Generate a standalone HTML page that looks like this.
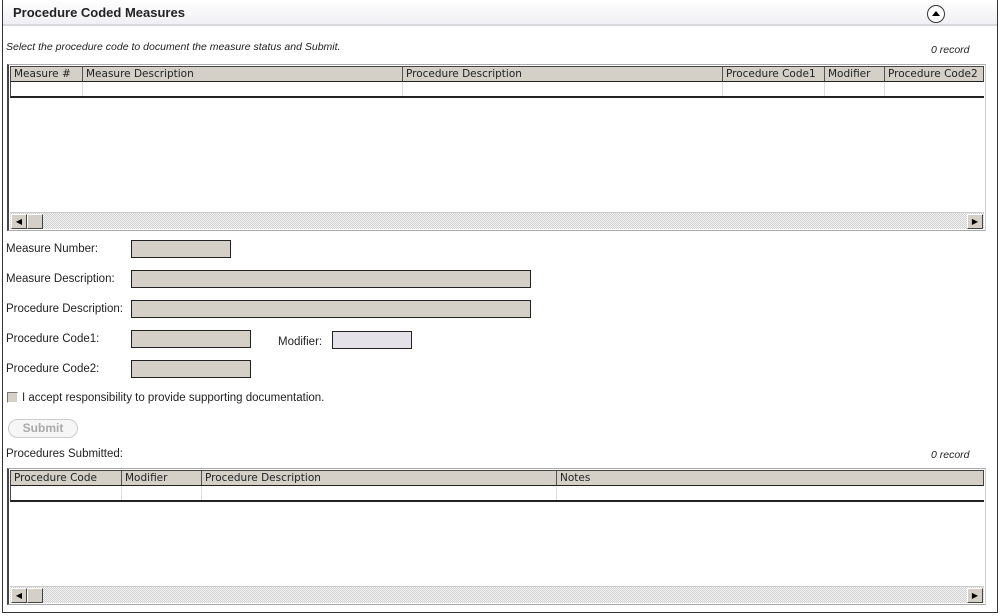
<!DOCTYPE html>
<html><head><style>
*{box-sizing:border-box;margin:0;padding:0}
body{width:1003px;height:616px;background:#fff;font-family:"Liberation Sans",sans-serif;font-size:11.5px;color:#222;position:relative;overflow:hidden}
.a{position:absolute}
.frame{left:2px;top:0;width:996px;height:613px;border:1px solid #333;border-top:none}
.hdr{left:3px;top:0;width:994px;height:26px;background:linear-gradient(#fff,#f0eff3);border-bottom:2px solid #d8d8dc}
.title{left:13px;top:5px;font-weight:bold;font-size:13px;color:#222}
.grid{border:1px solid #aaa;border-left:2px solid #444;border-right:1px solid #ccc}
.gh{position:absolute;left:1px;right:1px;top:1px;height:16px;background:#d4d0c8;border:1px solid #444;border-bottom:1px solid #222;font-family:"DejaVu Sans",sans-serif;font-size:10.5px}
.gh div,.gr div{position:absolute;top:0;height:100%;border-left:1px solid #555;padding-left:3px;line-height:14px;white-space:nowrap}
.gr{position:absolute;left:1px;right:1px;top:17px;height:16px;border-left:1px solid #444;border-bottom:2px solid #222}
.gr div{border-left:1px solid #ddd}
.sb{position:absolute;left:1px;right:1px;height:17px;background:repeating-conic-gradient(#d0d0d0 0 25%,#f4f4f4 0 50%) 0 0/2px 2px;border-top:1px solid #ccc}
.btn{position:absolute;top:1px;width:16px;height:15px;background:#d4d0c8;border:1px solid;border-color:#fff #444 #444 #fff;font-size:8px;line-height:13px;text-align:center;color:#000}
.inp{background:#d4d0c8;border:1px solid #222;height:18px}
.it{font-style:italic;font-size:10.5px}
</style></head><body>
<div class="a frame"></div>
<div class="a hdr"></div>
<div class="a title">Procedure Coded Measures</div>
<div class="a" style="left:927px;top:5px;width:18px;height:18px;border:1px solid #333;border-radius:50%;background:#fff"><div style="position:absolute;left:4px;top:5px;width:0;height:0;border-left:4px solid transparent;border-right:4px solid transparent;border-bottom:5px solid #000"></div></div>
<div class="a it" style="left:6px;top:41px">Select the procedure code to document the measure status and Submit.</div>
<div class="a it" style="left:931px;top:44px">0 record</div>

<div class="a grid" style="left:7px;top:64px;width:979px;height:167px">
<div class="gh"><div style="left:0;border:none">Measure #</div><div style="left:71px">Measure Description</div><div style="left:391px">Procedure Description</div><div style="left:711px">Procedure Code1</div><div style="left:813px">Modifier</div><div style="left:873px">Procedure Code2</div></div>
<div class="gr"><div style="left:71px"></div><div style="left:391px"></div><div style="left:711px"></div><div style="left:813px"></div><div style="left:873px"></div></div>
<div class="sb" style="top:147px"><div class="btn" style="left:1px">◀</div><div class="btn" style="left:17px"></div><div class="btn" style="right:1px">▶</div></div>
</div>

<div class="a" style="left:6px;top:243px">Measure Number:</div>
<div class="a inp" style="left:131px;top:240px;width:100px"></div>
<div class="a" style="left:6px;top:273px">Measure Description:</div>
<div class="a inp" style="left:131px;top:270px;width:400px"></div>
<div class="a" style="left:6px;top:303px">Procedure Description:</div>
<div class="a inp" style="left:131px;top:300px;width:400px"></div>
<div class="a" style="left:6px;top:333px">Procedure Code1:</div>
<div class="a inp" style="left:131px;top:330px;width:120px"></div>
<div class="a" style="left:278px;top:336px">Modifier:</div>
<div class="a inp" style="left:332px;top:331px;width:80px;background:#e4e2e8"></div>
<div class="a" style="left:6px;top:363px">Procedure Code2:</div>
<div class="a inp" style="left:131px;top:360px;width:120px"></div>
<div class="a" style="left:7px;top:392px;width:11px;height:11px;background:#d4d0c8;border:1px solid;border-color:#777 #fff #fff #777"></div>
<div class="a" style="left:22px;top:392px">I accept responsibility to provide supporting documentation.</div>
<div class="a" style="left:8px;top:419px;width:70px;height:19px;border:1px solid #ccc;border-radius:10px;background:#f6f6f6;color:#aaa;font-weight:bold;text-align:center;line-height:17px;font-size:12px">Submit</div>
<div class="a" style="left:6px;top:448px">Procedures Submitted:</div>
<div class="a it" style="left:931px;top:449px">0 record</div>

<div class="a grid" style="left:7px;top:468px;width:979px;height:137px">
<div class="gh"><div style="left:0;border:none">Procedure Code</div><div style="left:110px">Modifier</div><div style="left:190px">Procedure Description</div><div style="left:545px">Notes</div></div>
<div class="gr"><div style="left:110px"></div><div style="left:190px"></div><div style="left:545px"></div></div>
<div class="sb" style="top:117px"><div class="btn" style="left:1px">◀</div><div class="btn" style="left:17px"></div><div class="btn" style="right:1px">▶</div></div>
</div>
</body></html>
